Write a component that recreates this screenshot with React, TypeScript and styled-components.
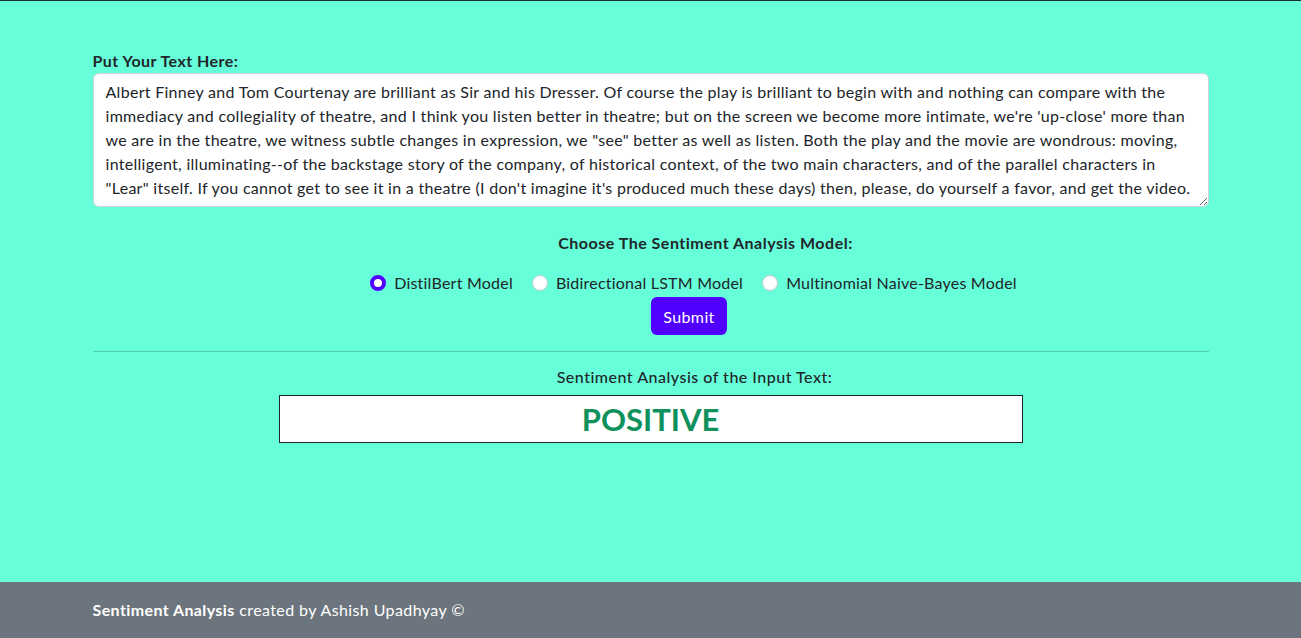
import React, { useState } from "react";
import styled, { createGlobalStyle } from "styled-components";

const GlobalStyle = createGlobalStyle`
  html, body { margin: 0; padding: 0; }
  body {
    font-family: Lato, "Open Sans", "Liberation Sans", sans-serif;
    font-size: 16px;
    line-height: 24px;
    letter-spacing: 0.22px;
    color: #212529;
    background: #66ffd9;
  }
  * { box-sizing: border-box; }
`;

const Page = styled.div`
  min-height: 638px;
  display: flex;
  flex-direction: column;
  border-top: 1px solid #17332c;
`;

const Main = styled.main`
  flex: 1;
  width: 1116px;
  margin: 0 auto;
  padding-top: 48px;
  display: flex;
  flex-direction: column;
`;

const Label = styled.label`
  font-weight: 700;
  letter-spacing: 0.45px;
  display: block;
`;

const TextArea = styled.textarea`
  display: block;
  width: 100%;
  height: 134px;
  padding: 6px 12px;
  font-family: inherit;
  font-size: 16px;
  line-height: 24px;
  letter-spacing: 0.29px;
  color: #212529;
  background: #fff;
  border: 1px solid #ced4da;
  border-radius: 6px;
  resize: vertical;
  overflow: hidden;
`;

const Centered = styled.div<{ $shift: number; $mt: number }>`
  display: flex;
  justify-content: center;
  align-items: center;
  padding-left: ${(p) => p.$shift}px;
  margin-top: ${(p) => p.$mt}px;
`;

const Heading = styled.div<{ $bold?: boolean }>`
  font-weight: ${(p) => (p.$bold ? 700 : 500)};
  letter-spacing: 0.5px;
`;

const RadioItem = styled.label`
  display: inline-flex;
  align-items: center;
  gap: 8px;
  margin-right: 19px;
  cursor: pointer;
  &:last-child { margin-right: 0; }
`;

const RadioCircle = styled.span<{ $checked: boolean }>`
  width: 16px;
  height: 16px;
  border-radius: 50%;
  box-sizing: border-box;
  border: ${(p) => (p.$checked ? "4px solid #5100ff" : "1px solid #c8cdd2")};
  background: #fff;
  flex: none;
`;

const Button = styled.button`
  height: 38px;
  padding: 0 12px;
  font-family: inherit;
  font-size: 16px;
  letter-spacing: 0.4px;
  color: #fff;
  background: #5100ff;
  border: none;
  border-radius: 6px;
  cursor: pointer;
`;

const Rule = styled.hr`
  border: none;
  border-top: 1px solid #4fd0b2;
  margin: 16px 0 13px;
  width: 100%;
`;

const ResultBox = styled.div`
  align-self: center;
  width: 744px;
  height: 48px;
  margin-top: 6px;
  background: #fff;
  border: 1px solid #212529;
  display: flex;
  justify-content: center;
  align-items: center;
  font-size: 31px;
  font-weight: 700;
  letter-spacing: 0;
  color: #0f915e;
`;

const Footer = styled.footer`
  height: 56px;
  background: #6c757d;
  color: #fff;
  display: flex;
  align-items: center;
  letter-spacing: 0.4px;
`;

const FooterInner = styled.div`
  width: 1116px;
  margin: 0 auto;
`;

const text = `Albert Finney and Tom Courtenay are brilliant as Sir and his Dresser. Of course the play is brilliant to begin with and nothing can compare with the immediacy and collegiality of theatre, and I think you listen better in theatre; but on the screen we become more intimate, we're 'up-close' more than we are in the theatre, we witness subtle changes in expression, we "see" better as well as listen. Both the play and the movie are wondrous: moving, intelligent, illuminating--of the backstage story of the company, of historical context, of the two main characters, and of the parallel characters in "Lear" itself. If you cannot get to see it in a theatre (I don't imagine it's produced much these days) then, please, do yourself a favor, and get the video.`;

const models = ["DistilBert Model", "Bidirectional LSTM Model", "Multinomial Naive-Bayes Model"];

export default function App() {
  const [value, setValue] = useState(text);
  const [model, setModel] = useState(0);
  return (
    <>
      <GlobalStyle />
      <Page>
        <Main>
          <Label htmlFor="txt">Put Your Text Here:</Label>
          <TextArea id="txt" value={value} onChange={(e) => setValue(e.target.value)} />
          <Centered $shift={110} $mt={24}>
            <Heading $bold>Choose The Sentiment Analysis Model:</Heading>
          </Centered>
          <Centered $shift={86} $mt={16}>
            {models.map((m, i) => (
              <RadioItem key={m} onClick={() => setModel(i)}>
                <RadioCircle $checked={model === i} />
                {m}
              </RadioItem>
            ))}
          </Centered>
          <Centered $shift={77} $mt={2}>
            <Button>Submit</Button>
          </Centered>
          <Rule />
          <Centered $shift={88} $mt={0}>
            <Heading>Sentiment Analysis of the Input Text:</Heading>
          </Centered>
          <ResultBox>POSITIVE</ResultBox>
        </Main>
        <Footer>
          <FooterInner>
            <b>Sentiment Analysis</b> created by Ashish Upadhyay ©
          </FooterInner>
        </Footer>
      </Page>
    </>
  );
}
